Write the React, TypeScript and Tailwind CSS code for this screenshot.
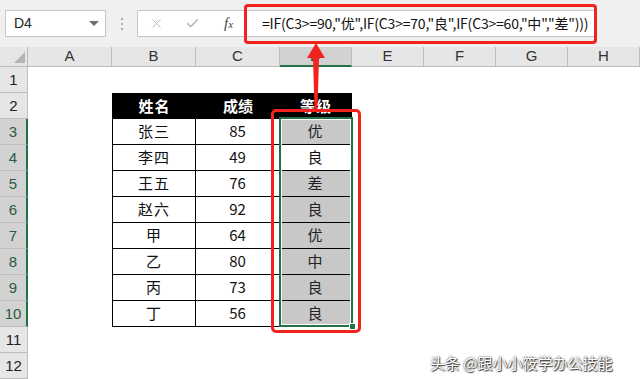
import { X, Check } from 'lucide-react';

const COLS = ['A', 'B', 'C', 'D', 'E', 'F', 'G', 'H'];
const WIDTHS = ['w-[84px]', 'w-[84px]', 'w-[84px]', 'w-[72px]', 'w-[72px]', 'w-[72px]', 'w-[72px]', 'w-[72px]'];

const rows: [string, string, string][] = [
    ['张三', '85', '优'],
    ['李四', '49', '良'],
    ['王五', '76', '差'],
    ['赵六', '92', '良'],
    ['甲', '64', '优'],
    ['乙', '80', '中'],
    ['丙', '73', '良'],
    ['丁', '56', '良'],
];

const cjk = { fontFamily: '"Noto Sans CJK SC", "Liberation Sans", sans-serif' };
const ui = { fontFamily: '"Liberation Sans", "Noto Sans CJK SC", sans-serif' };

function Toolbar() {
    return (
        <div className="h-[47px] bg-[#f0f0f0] flex items-center px-[5px] gap-0">
            {/* name box */}
            <div className="w-[101px] h-[27px] bg-white border border-[#c6c6c6] flex items-center justify-between pl-[8px] pr-[6px]">
                <span className="text-[14px] text-[#222]" style={ui}>D4</span>
                <span className="w-0 h-0 border-l-[5px] border-r-[5px] border-t-[5px] border-l-transparent border-r-transparent border-t-[#707070]" />
            </div>
            {/* dots */}
            <div className="w-[31px] flex flex-col items-center gap-[3px]">
                <span className="w-[2px] h-[2px] bg-[#a8a8a8]" />
                <span className="w-[2px] h-[2px] bg-[#a8a8a8]" />
                <span className="w-[2px] h-[2px] bg-[#a8a8a8]" />
            </div>
            {/* formula box */}
            <div className="flex-1 h-[27px] bg-white border border-[#c6c6c6] flex items-center mr-[40px]">
                <div className="w-[124px] shrink-0 h-full flex items-center">
                    <X className="ml-[11px] text-[#b8b8b8]" size={15} strokeWidth={1.6} />
                    <Check className="ml-[21px] text-[#b8b8b8]" size={15} strokeWidth={2.4} />
                    <span className="ml-[24px] text-[15px] italic text-[#444] leading-none" style={{ fontFamily: '"Liberation Serif", serif' }}>
                        f<span className="text-[11px]">x</span>
                    </span>
                </div>
                <span className="text-[14px] tracking-[-0.2px] text-[#111] whitespace-nowrap" style={cjk}>
                    =IF(C3&gt;=90,"优",IF(C3&gt;=70,"良",IF(C3&gt;=60,"中","差")))
                </span>
            </div>
        </div>
    );
}

function HeaderRow() {
    return (
        <div className="flex h-[20px]">
            <div className="w-[28px] bg-[#e6e6e6] border-r border-b border-[#bdbdbd] relative">
                <span className="absolute right-[2px] bottom-[3px] w-0 h-0 border-b-[11px] border-l-[11px] border-b-[#b4b4b4] border-l-transparent" />
            </div>
            {COLS.map((c, i) => (
                <div
                    key={c}
                    className={`${WIDTHS[i]} flex items-center justify-center text-[15px] text-[#333] border-r border-[#bdbdbd] ${
                        c === 'D' ? 'bg-[#d2d2d2] border-b-2 border-b-[#217346]' : 'bg-[#e6e6e6] border-b border-b-[#bdbdbd]'
                    }`}
                    style={ui}
                >
                    {c}
                </div>
            ))}
        </div>
    );
}

function RowHead({ n }: { n: number }) {
    const sel = n >= 3 && n <= 10;
    return (
        <div
            className={`w-[28px] flex items-end justify-center pb-[1px] text-[15px] border-b border-[#bdbdbd] ${
                sel ? 'bg-[#d2d2d2] text-[#2c5a40] border-r-2 border-r-[#217346]' : 'bg-[#e6e6e6] text-[#222] border-r border-r-[#bdbdbd]'
            }`}
            style={ui}
        >
            {n}
        </div>
    );
}

function SheetRow({ n }: { n: number }) {
    const isHead = n === 2;
    const data = n >= 3 && n <= 10 ? rows[n - 3] : null;
    return (
        <div className="flex h-[26px]">
            <RowHead n={n} />
            {COLS.map((c, i) => {
                const inTable = (isHead || data) && (c === 'B' || c === 'C' || c === 'D');
                if (!inTable) return <div key={c} className={`${WIDTHS[i]} bg-white`} />;
                const idx = c === 'B' ? 0 : c === 'C' ? 1 : 2;
                const text = isHead ? ['姓名', '成绩', '等级'][idx] : data![idx];
                let cls = 'bg-white text-[#111]';
                if (isHead) cls = 'bg-black text-white font-bold';
                else if (c === 'D' && n !== 4) cls = 'bg-[#c8c8c8] text-[#222]';
                return (
                    <div
                        key={c}
                        className={`${WIDTHS[i]} flex items-center justify-center text-[15px] border-black ${cls} ${
                            isHead ? '' : 'border-b border-r'
                        } ${c === 'B' ? 'border-l' : ''} ${idx === 1 ? '' : 'tracking-[1px]'}`}
                        style={cjk}
                    >
                        {text}
                    </div>
                );
            })}
        </div>
    );
}

export default function App() {
    return (
        <div className="w-[640px] h-[379px] overflow-hidden bg-white relative">
            <Toolbar />
            <HeaderRow />
            {Array.from({ length: 12 }, (_, i) => (
                <SheetRow key={i} n={i + 1} />
            ))}

            {/* selection D3:D10 */}
            <div className="absolute left-[279px] top-[117px] w-[74px] h-[210px] border-2 border-[#217346] pointer-events-none">
                <div className="w-full h-full border border-white" />
                <span className="absolute right-[-5px] bottom-[-5px] w-[7px] h-[7px] bg-[#217346] border border-white" />
            </div>

            {/* red annotation boxes */}
            <div className="absolute left-[244px] top-[4px] w-[353px] h-[40px] border-[3px] border-[#f2231c] rounded-[4px]" />
            <div className="absolute left-[271px] top-[109px] w-[90px] h-[224px] border-[3px] border-[#f2231c] rounded-[5px]" />

            {/* arrow */}
            <svg className="absolute left-[300px] top-[42px]" width="32" height="72" viewBox="0 0 32 72">
                <polygon points="16,1 25,16 19,16 17.5,68 14.5,68 13,16 7,16" fill="#f2231c" />
            </svg>

            {/* watermark */}
            <div
                className="absolute left-[430px] top-[352px] text-[15px] text-white whitespace-nowrap"
                style={{ ...cjk, textShadow: '0 0 2px rgba(0,0,0,0.9), 1px 1px 1px rgba(0,0,0,0.7)' }}
            >
                头条 @跟小小筱学办公技能
            </div>
        </div>
    );
}
